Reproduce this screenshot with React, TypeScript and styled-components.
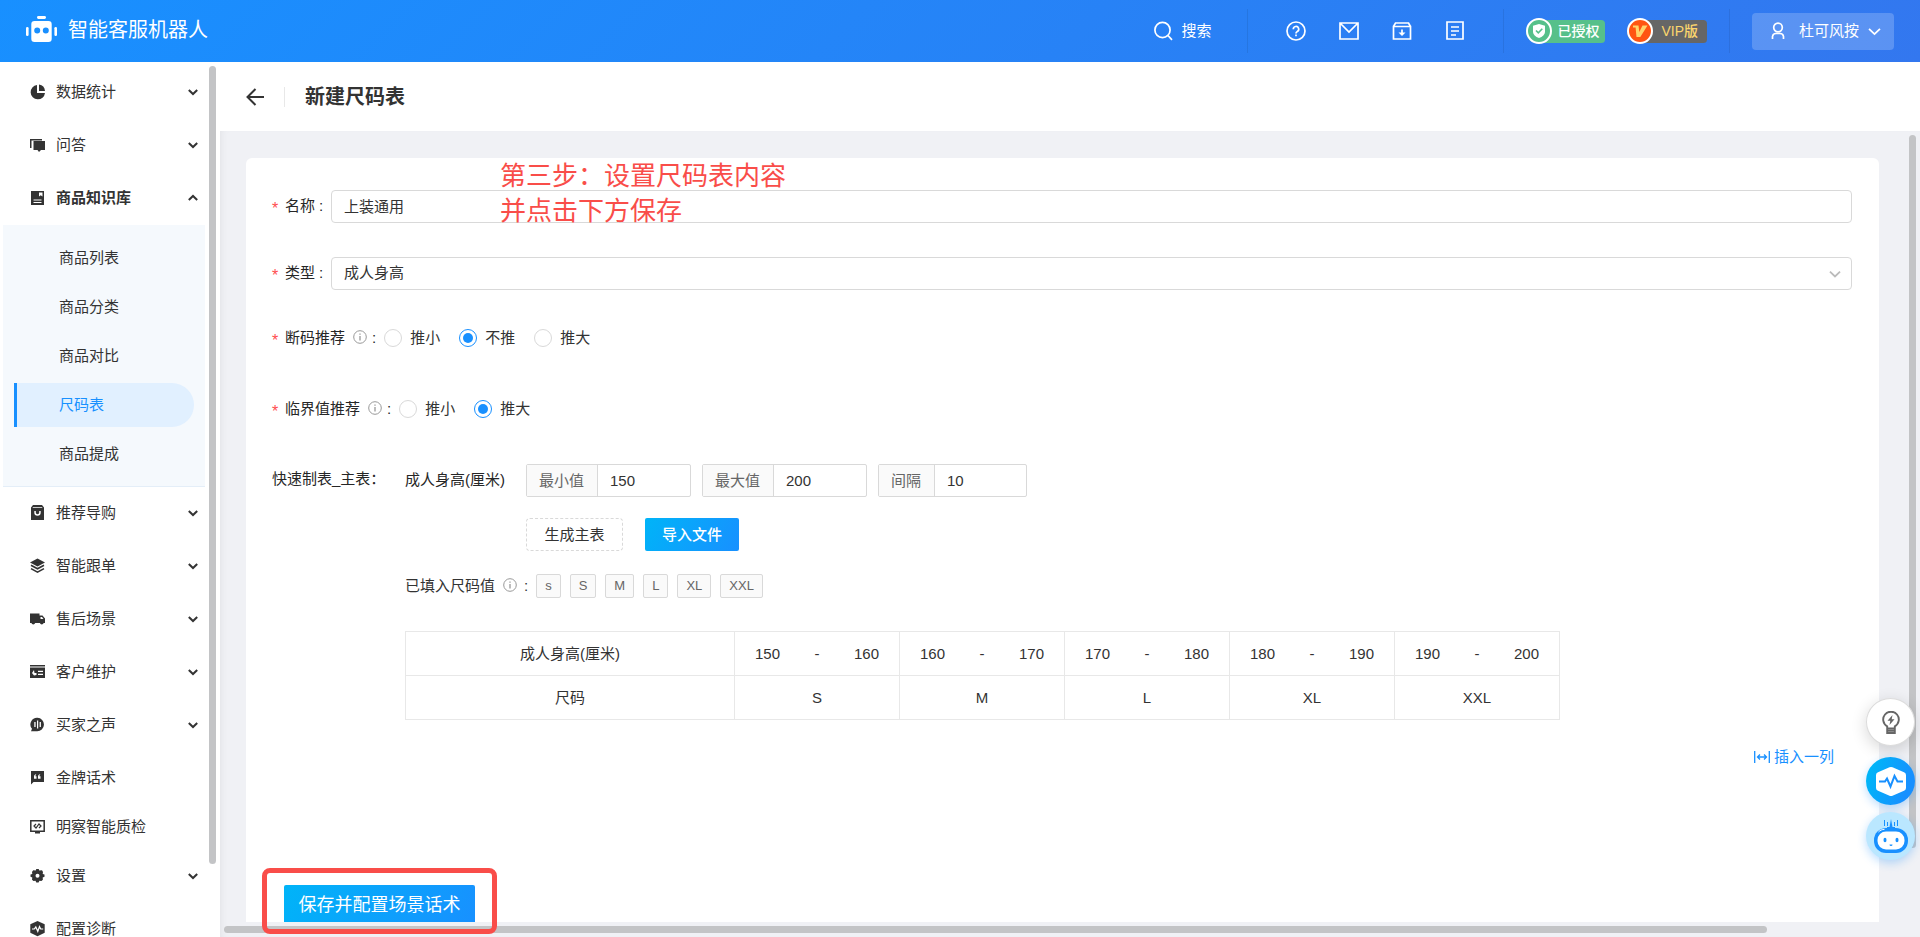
import React from "react";
import styled, { createGlobalStyle, css } from "styled-components";

const BLUE = "#1890ff";
const RED = "#f94d49";
const INK = "#333";

const GlobalStyle = createGlobalStyle`
  *, *::before, *::after { box-sizing: border-box; }
  body {
    margin: 0;
    color: ${INK};
    font: 15px/22px "Liberation Sans", "Noto Sans CJK SC", sans-serif;
    background: #f0f1f5;
  }
  button, input, select { font: inherit; color: inherit; }
  button { cursor: pointer; }
  a { color: inherit; text-decoration: none; }
`;

const Shell = styled.div`
  display: flex;
  flex-direction: column;
  height: 100vh;
  overflow: hidden;
`;

/* ---------- header ---------- */

const Header = styled.header`
  display: flex;
  align-items: center;
  flex: none;
  height: 62px;
  padding: 0 26px;
  color: #fff;
  background: linear-gradient(135deg, #1890ff, #3377ef);
`;

const Brand = styled.a`
  display: flex;
  align-items: center;
  gap: 11px;
  margin-right: auto;
  padding-bottom: 3px;
  font-size: 20px;
  line-height: 28px;
`;

const PlainButton = styled.button`
  display: flex;
  align-items: center;
  gap: 8px;
  padding: 0;
  border: 0;
  background: none;
`;

const HeaderRule = styled.span<{ $left: number; $right: number }>`
  width: 1px;
  height: 44px;
  margin: 0 ${(p) => p.$right}px 0 ${(p) => p.$left}px;
  background: rgba(0, 0, 0, 0.08);
`;

const HeaderTools = styled.div`
  display: flex;
  gap: 33px;
`;

const Badges = styled.div`
  display: flex;
  gap: 22px;
`;

const Badge = styled.span<{ $vip?: boolean }>`
  display: flex;
  align-items: center;
  height: 23px;
  padding-right: ${(p) => (p.$vip ? 9 : 6)}px;
  gap: ${(p) => (p.$vip ? 8 : 5)}px;
  border-radius: 12px 4px 4px 12px;
  color: ${(p) => (p.$vip ? "#fbd56d" : "#fff")};
  background: ${(p) => (p.$vip ? "#666" : "#56c08a")};
  font-size: 14px;
  font-weight: 500;
  line-height: 23px;
`;

const UserButton = styled.button`
  display: flex;
  align-items: center;
  height: 37px;
  padding: 0 13px 0 18px;
  border: 0;
  border-radius: 4px;
  background: rgba(255, 255, 255, 0.2);
  color: #fff;
`;

const UserName = styled.span`
  margin: 0 9px 0 13px;
`;

/* ---------- sidebar ---------- */

const Body = styled.div`
  display: flex;
  flex: 1;
  min-height: 0;
`;

const Sidebar = styled.aside`
  display: flex;
  flex: none;
  width: 220px;
  overflow: hidden;
  background: #fff;
`;

const Nav = styled.nav`
  flex: 1;
  padding-top: 5px;
`;

const NavGroup = styled.div<{ $leaf?: boolean; $open?: boolean }>`
  height: ${(p) => (p.$open ? 52 : p.$leaf ? 49 : 53)}px;
`;

const NavLink = styled.a<{ $open?: boolean }>`
  display: grid;
  grid-template-columns: 15px 1fr 10px;
  column-gap: 11px;
  align-items: center;
  height: 49px;
  padding: 0 7px 0 30px;
  font-weight: ${(p) => (p.$open ? 700 : 400)};
`;

const SubMenu = styled.div`
  margin: 0 0 1px 3px;
  padding: 8px 0 5px;
  border-bottom: 1px solid #e4eef8;
  background: #f5f9fd;
`;

const SubLink = styled.a<{ $active?: boolean }>`
  display: flex;
  align-items: center;
  height: 44px;
  margin: 3px 11px 5px;
  padding-left: 42px;
  border-left: 3px solid transparent;
  border-radius: 0 22px 22px 0;
  ${(p) =>
    p.$active &&
    css`
      border-color: ${BLUE};
      background: #e1f0ff;
      color: ${BLUE};
    `}
`;

const Track = styled.div<{ $horizontal?: boolean }>`
  flex: none;
  width: ${(p) => (p.$horizontal ? "auto" : "15px")};
  padding: 4px;
`;

const Thumb = styled.div<{ $horizontal?: boolean; $share: number }>`
  width: ${(p) => (p.$horizontal ? `${p.$share}%` : "7px")};
  height: ${(p) => (p.$horizontal ? "7px" : `${p.$share}%`)};
  border-radius: 4px;
  background: #c3c4c6;
`;

/* ---------- main column ---------- */

const Main = styled.main`
  position: relative;
  display: flex;
  flex-direction: column;
  flex: 1;
  min-width: 0;
`;

const TitleBar = styled.div`
  display: flex;
  align-items: center;
  flex: none;
  height: 69px;
  padding-left: 26px;
  background: #fff;
`;

const TitleRule = styled.span`
  width: 1px;
  height: 20px;
  margin: 0 20px 0 19px;
  background: #e8e8e8;
`;

const Title = styled.h1`
  margin: 0;
  font-size: 20px;
  line-height: 28px;
`;

const Workspace = styled.div`
  display: grid;
  grid-template-columns: minmax(0, 1fr) 15px;
  grid-template-rows: minmax(0, 1fr) 15px;
  flex: 1;
  min-height: 0;
  box-shadow: inset 6px 0 8px -6px rgba(0, 0, 0, 0.08);
`;

const Viewport = styled.div`
  padding: 27px 26px 0;
  overflow: hidden;
`;

const Card = styled.form`
  position: relative;
  padding: 32px 27px 24px 26px;
  border-radius: 6px;
  background: #fff;
`;

const FormRow = styled.div<{ $after: number; $short?: boolean }>`
  display: flex;
  align-items: center;
  height: ${(p) => (p.$short ? 28 : 33)}px;
  margin-bottom: ${(p) => p.$after}px;
`;

const labelText = css`
  display: flex;
  align-items: center;
  flex: none;
  color: #262626;
`;

const FieldLabel = styled.label`
  ${labelText}
  width: 59px;
  padding-bottom: 2px;
`;

const GroupLabel = styled.span`
  ${labelText}
  margin-right: 8px;
`;

const Star = styled.span`
  width: 13px;
  padding-top: 6px;
  color: #ff4d4f;
  font-size: 16px;
`;

const Colon = styled.span<{ $gap: number }>`
  margin-left: ${(p) => p.$gap}px;
`;

const InfoSlot = styled.span`
  display: flex;
  margin: 0 0 3px 8px;
`;

const control = css`
  width: 100%;
  min-width: 0;
  height: 33px;
  padding: 0 12px 2px;
  border: 1px solid #d9d9d9;
  border-radius: 4px;
  background: #fff;
  outline: 0;
`;

const TextInput = styled.input`
  ${control}
`;

const SelectWrap = styled.div`
  position: relative;
  flex: 1;
`;

const Select = styled.select`
  ${control}
  display: block;
  appearance: none;
`;

const SelectArrow = styled.span`
  position: absolute;
  top: 11px;
  right: 11px;
  display: flex;
  pointer-events: none;
`;

const RadioLabel = styled.label`
  display: flex;
  align-items: center;
  gap: 8px;
  margin-right: 19px;
`;

const Radio = styled.input`
  display: grid;
  place-content: center;
  appearance: none;
  width: 18px;
  height: 18px;
  margin: 0;
  border: 1px solid #d9d9d9;
  border-radius: 50%;
  background: #fff;
  &:checked { border-color: ${BLUE}; }
  &:checked::before {
    content: "";
    width: 10px;
    height: 10px;
    border-radius: 50%;
    background: ${BLUE};
  }
`;

const Builder = styled.section`
  display: flex;
`;

const BuilderLabel = styled.span`
  flex: none;
  width: 133px;
  padding-top: 4px;
  color: #262626;
`;

const BuilderBody = styled.div`
  flex: 1;
  min-width: 0;
`;

const BuilderRow = styled.div<{ $after: number; $indent?: boolean }>`
  display: flex;
  align-items: center;
  padding-left: ${(p) => (p.$indent ? 121 : 0)}px;
  margin-bottom: ${(p) => p.$after}px;
`;

const Measure = styled.span`
  width: 121px;
  padding-bottom: 2px;
  color: #262626;
`;

const AddonGroup = styled.label<{ $short?: boolean }>`
  display: flex;
  width: ${(p) => (p.$short ? 149 : 165)}px;
  height: 33px;
  margin-right: 11px;
  border: 1px solid #d9d9d9;
  border-radius: 2px;
`;

const Addon = styled.span`
  flex: none;
  padding: 5px 13px 4px 12px;
  border-right: 1px solid #d9d9d9;
  background: #fafafa;
  color: #666;
`;

const AddonInput = styled.input`
  width: 100%;
  min-width: 0;
  padding: 1px 12px 0;
  border: 0;
  background: none;
  outline: 0;
`;

const DashedButton = styled.button`
  width: 97px;
  height: 33px;
  margin-right: 22px;
  padding: 0;
  border: 1px dashed #d9d9d9;
  border-radius: 4px;
  background: #fff;
`;

const PrimaryButton = styled.button<{ $large?: boolean }>`
  width: ${(p) => (p.$large ? 191 : 94)}px;
  height: ${(p) => (p.$large ? 40 : 33)}px;
  padding: 0;
  border: 0;
  border-radius: 2px;
  background: linear-gradient(120deg, #00b4f8, ${BLUE});
  color: #fff;
  font-size: ${(p) => (p.$large ? 18 : 15)}px;
  font-weight: ${(p) => (p.$large ? 400 : 500)};
`;

const TagList = styled.ul`
  display: flex;
  gap: 9px;
  margin: 0 0 0 8px;
  padding: 0;
  list-style: none;
`;

const Tag = styled.li`
  height: 24px;
  padding: 0 8px;
  border: 1px solid #d9d9d9;
  border-radius: 2px;
  background: #fafafa;
  color: #666;
  font-size: 13px;
  line-height: 22px;
`;

const SizeTable = styled.table`
  width: 1155px;
  table-layout: fixed;
  border-collapse: collapse;
  th, td {
    height: 44px;
    padding: 0;
    border: 1px solid #e8e8e8;
    font-weight: 400;
    text-align: center;
  }
`;

const HeadColumn = styled.col`
  width: 329px;
`;

const Range = styled.div`
  display: flex;
  justify-content: space-between;
  padding: 0 20px;
`;

const InsertLink = styled.a`
  display: flex;
  align-items: center;
  justify-content: flex-end;
  gap: 4px;
  margin: 26px 18px 117px;
  color: ${BLUE};
`;

const Actions = styled.div`
  padding-left: 12px;
`;

/* ---------- overlays ---------- */

const Note = styled.p`
  position: absolute;
  top: 1px;
  left: 254px;
  margin: 0;
  color: ${RED};
  font-size: 26px;
  line-height: 35px;
  pointer-events: none;
`;

const Marker = styled.div`
  position: absolute;
  left: 42px;
  bottom: 3px;
  width: 235px;
  height: 66px;
  border: 5px solid ${RED};
  border-radius: 8px;
  pointer-events: none;
`;

const FloatBar = styled.div`
  position: fixed;
  right: 5px;
  bottom: 77px;
  display: flex;
  flex-direction: column;
  gap: 7px;
`;

const FloatButton = styled.button<{ $tone: "plain" | "pulse" | "robot" }>`
  display: grid;
  place-items: center;
  width: 49px;
  height: 48px;
  margin-bottom: ${(p) => (p.$tone === "plain" ? 4 : 0)}px;
  padding: 0;
  border: ${(p) => (p.$tone === "plain" ? "1px solid #dcdcdc" : "0")};
  border-radius: 50%;
  background: ${(p) =>
    ({
      plain: "#fff",
      pulse: `linear-gradient(110deg, #00b4f8 15%, ${BLUE} 80%)`,
      robot: "#bae7ff",
    })[p.$tone]};
  box-shadow: ${(p) =>
    p.$tone === "plain" ? "0 4px 16px rgba(0,0,0,.16)" : "0 3px 10px rgba(24,144,255,.3)"};
`;

/* ---------- drawings ---------- */

const RobotLogo = () => (
  <svg width="31" height="27" viewBox="0 0 31 27" fill="#fff" aria-hidden="true">
    <rect x="11" y="0" width="9" height="3" rx="1.4" />
    <path
      fillRule="evenodd"
      d="M8.5 5h14A3.2 3.2 0 0 1 25.700 8.200v14.600a3.200 3.200 0 0 1-3.200 3.200h-14a3.200 3.200 0 0 1-3.200-3.200V8.200A3.200 3.200 0 0 1 8.500 5zM11.200 11.400a3 3 0 1 0 0 6 3 3 0 0 0 0-6zm8.600 0a3 3 0 1 0 0 6 3 3 0 0 0 0-6z"
    />
    <rect x="0" y="11" width="2.600" height="9" rx="1.200" />
    <rect x="28.400" y="11" width="2.600" height="9" rx="1.200" />
  </svg>
);

const Chevron = ({ up, size = 10, color = INK, width = 2 }: { up?: boolean; size?: number; color?: string; width?: number }) => (
  <svg width={size} height={size} viewBox="0 0 10 10" fill="none" stroke={color} strokeWidth={width} aria-hidden="true">
    <path d={up ? "M.8 7 5 3l4.200 4" : "M.8 3 5 7l4.200-4"} />
  </svg>
);

const Info = () => (
  <InfoSlot>
    <svg width="14" height="14" viewBox="0 0 14 14" fill="none" stroke="#999" aria-hidden="true">
      <circle cx="7" cy="7" r="6.300" />
      <path d="M7 6v4.400M7 3.400v1.400" strokeWidth="1.300" />
    </svg>
  </InfoSlot>
);

const Line = ({ children, width = 20, height = 22 }: { children: React.ReactNode; width?: number; height?: number }) => (
  <svg width={width} height={height} viewBox={`0 0 ${width} ${height}`} fill="none" stroke="#fff" strokeWidth="1.700" aria-hidden="true">
    {children}
  </svg>
);

const menuShapes: Record<string, React.ReactNode> = {
  pie: <path d="M7 1v8h8A7.200 7.200 0 1 1 7 1zM9 .6A7 7 0 0 1 15 7H9z" />,
  chat: (
    <>
      <path d="M0 2h12v1.500H1.500V11H0z" />
      <path d="M3.500 4H15v9h-4l-2 2-1.500-2h-4z" />
    </>
  ),
  book: <path fillRule="evenodd" d="M1 1h13v14H1zM9 2.500v4l1.700-1.200L12.500 6.500v-4zM3.500 9.500v1h8v-1zm0 2.500v1h8v-1z" />,
  bag: <path fillRule="evenodd" d="M3 0h9l2 2.500V15H1V2.500zM3 2l-.5.8h10L12 2zM4.300 6v1.500a3.200 3.200 0 0 0 6.400 0V6H9.200v1.500a1.700 1.700 0 0 1-3.400 0V6z" />,
  layers: (
    <>
      <path d="M7.500.5 15 4.500l-7.500 4L0 4.500z" />
      <path d="m1 7.300 6.500 3.500L14 7.300M1 10.600l6.500 3.500 6.500-3.500" fill="none" stroke={INK} strokeWidth="1.600" />
    </>
  ),
  truck: (
    <path
      fillRule="evenodd"
      d="M0 2.500h9.500v2h3L15 7.500V12h-1.300a2 2 0 0 1-3.800 0H5.200a2 2 0 0 1-3.800 0H0zM10.500 6v2h3L12 6z"
    />
  ),
  card: <path fillRule="evenodd" d="M0 1h15v1.600H0zM0 3.600h15V14H0zM4 6 2 9l2 2.500 2.500-.5V9H4.500zM8 6.700V8h5V6.700zM8 9.700V11h5V9.700z" />,
  voice: (
    <path
      fillRule="evenodd"
      d="M7.500.8A6.700 6.700 0 1 1 7 14.200H1l1-2.400A6.700 6.700 0 0 1 7.500.8zM4.300 5v5h1.300V5zm2.700-1.500v8h1.200v-8zM9.600 5v5h1.300V5z"
    />
  ),
  quote: (
    <path
      fillRule="evenodd"
      d="M1 1h13v11H3.500L1 14.500zM4 6.500v2.300h2.500V6.300H5.300L6.300 4C4.800 4.400 4 5.300 4 6.500zm4 0v2.300h2.500V6.300H9.300L10.300 4C8.800 4.400 8 5.300 8 6.500z"
    />
  ),
  monitor: (
    <>
      <path d="M.8 1.800h13.400v10.400H.8z" fill="none" stroke={INK} strokeWidth="1.500" />
      <path d="M5 12h5v2.500H5z" />
      <path d="M6 5 4 7l2 2 3-4 2 2-2 2" fill="none" stroke={INK} strokeWidth="1.200" />
    </>
  ),
  gear: (
    <path
      fillRule="evenodd"
      d="M6.300 1h2.400l.6 1.500 2.700-.2 1 1.800-.3 1.800 1.800.7v2.200l-1.800.8.2 2.200-1.500 1.300-2-.4-.8 1.800H6.300l-.8-1.800-2 .4L2 11.800l.3-2.200L.5 8.800V6.600l1.800-.7L2 4.100 3.200 2.300l2.500.2zM7.500 5.700a2 2 0 1 0 0 4 2 2 0 0 0 0-4z"
    />
  ),
  pulse: (
    <>
      <path d="m7.500 0 7.200 3.200v8.600L7.500 15.200.3 11.800V3.200z" />
      <path d="M2 8h2.300l1.500-2 2 4.300L9.500 5.500l1.200 2.500h2.500" fill="none" stroke="#fff" strokeWidth="1.200" />
    </>
  ),
};

const MenuIcon = ({ name }: { name: string }) => (
  <svg width="15" height="16" viewBox="0 0 15 16" fill={INK} aria-hidden="true">
    {menuShapes[name]}
  </svg>
);

/* ---------- data ---------- */

type MenuEntry = { label: string; icon: string; leaf?: boolean; children?: string[] };

const menu: MenuEntry[] = [
  { label: "数据统计", icon: "pie" },
  { label: "问答", icon: "chat" },
  { label: "商品知识库", icon: "book", children: ["商品列表", "商品分类", "商品对比", "尺码表", "商品提成"] },
  { label: "推荐导购", icon: "bag" },
  { label: "智能跟单", icon: "layers" },
  { label: "售后场景", icon: "truck" },
  { label: "客户维护", icon: "card" },
  { label: "买家之声", icon: "voice" },
  { label: "金牌话术", icon: "quote", leaf: true },
  { label: "明察智能质检", icon: "monitor", leaf: true },
  { label: "设置", icon: "gear" },
  { label: "配置诊断", icon: "pulse", leaf: true },
];

const sizes = [
  { from: 150, to: 160, size: "S" },
  { from: 160, to: 170, size: "M" },
  { from: 170, to: 180, size: "L" },
  { from: 180, to: 190, size: "XL" },
  { from: 190, to: 200, size: "XXL" },
];

const RadioRow = ({ label, name, options, value, after }: { label: string; name: string; options: string[]; value: string; after: number }) => (
  <FormRow $short $after={after} role="radiogroup" aria-label={label}>
    <GroupLabel>
      <Star>*</Star>
      {label}
      <Info />
      <Colon $gap={5}>:</Colon>
    </GroupLabel>
    {options.map((option) => (
      <RadioLabel key={option}>
        <Radio type="radio" name={name} defaultChecked={option === value} />
        {option}
      </RadioLabel>
    ))}
  </FormRow>
);

const TopBar = () => (
  <Header>
    <Brand href="#">
      <RobotLogo />
      智能客服机器人
    </Brand>
    <PlainButton>
      <Line width={19}>
        <circle cx="8.500" cy="10" r="7.600" />
        <path d="m14 15.500 4 4.300" />
      </Line>
      搜索
    </PlainButton>
    <HeaderRule $left={36} $right={38} />
    <HeaderTools>
      <PlainButton aria-label="帮助">
        <Line>
          <circle cx="10" cy="11" r="9" />
          <path d="M7.300 9.200a2.700 2.700 0 1 1 4 2.300c-.9.500-1.300.8-1.300 1.900M10 14.600v1.700" />
        </Line>
      </PlainButton>
      <PlainButton aria-label="消息">
        <Line>
          <path d="M1 3h18v16H1zM1.500 3.500 10 12l8.500-8.500" />
        </Line>
      </PlainButton>
      <PlainButton aria-label="下载">
        <Line>
          <path d="M1.500 6.500h17V19h-17zM1.500 6.500 3.500 3h13l2 3.500M10 9.500v5" />
          <path d="M6.500 12.500h7L10 16z" fill="#fff" stroke="none" />
        </Line>
      </PlainButton>
      <PlainButton aria-label="文档">
        <Line>
          <path d="M2 2h16v17H2zM6 7h8M6 11h8M6 15h5" />
        </Line>
      </PlainButton>
    </HeaderTools>
    <HeaderRule $left={38} $right={22} />
    <Badges>
      <Badge>
        <svg width="26" height="26" viewBox="0 0 26 26" aria-hidden="true">
          <circle cx="13" cy="13" r="12" fill="#56c08a" stroke="#fff" strokeWidth="2" />
          <path d="m13 6 6 1.800v6.200c0 2.600-2.500 4.700-6 6-3.500-1.300-6-3.400-6-6V7.800z" fill="#fff" />
          <path d="m10 12.500 2.300 2.300 4-4" fill="none" stroke="#56c08a" strokeWidth="1.600" />
        </svg>
        已授权
      </Badge>
      <Badge $vip>
        <svg width="26" height="26" viewBox="0 0 26 26" aria-hidden="true">
          <circle cx="13" cy="13" r="12" fill="#ff5512" stroke="#fff" strokeWidth="2" />
          <path d="M6 7.500h5.500l.8 6.500 3.200-6.500H20.500L13.300 19H9.500L8.600 9.500H6z" fill="#ffd46b" />
        </svg>
        VIP版
      </Badge>
    </Badges>
    <HeaderRule $left={22} $right={22} />
    <UserButton>
      <Line width={16}>
        <circle cx="8" cy="7.500" r="4.300" />
        <path d="M2.500 19v-2.500a3.500 3.500 0 0 1 3.500-3h4a3.500 3.500 0 0 1 3.500 3V19" />
      </Line>
      <UserName>杜可风按</UserName>
      <Chevron size={13} color="#fff" width={1.4} />
    </UserButton>
  </Header>
);

const SideMenu = () => (
  <Sidebar>
    <Nav>
      {menu.map(({ label, icon, leaf, children }) => (
        <React.Fragment key={label}>
          <NavGroup $leaf={leaf} $open={!!children}>
            <NavLink href="#" $open={!!children}>
              <MenuIcon name={icon} />
              {label}
              {!leaf && <Chevron up={!!children} />}
            </NavLink>
          </NavGroup>
          {children && (
            <SubMenu>
              {children.map((child) => (
                <SubLink key={child} href="#" $active={child === "尺码表"}>
                  {child}
                </SubLink>
              ))}
            </SubMenu>
          )}
        </React.Fragment>
      ))}
    </Nav>
    <Track>
      <Thumb $share={92} />
    </Track>
  </Sidebar>
);

const SizeForm = () => (
  <Card onSubmit={(e) => e.preventDefault()}>
    <FormRow $after={34}>
      <FieldLabel htmlFor="chart-name">
        <Star>*</Star>名称<Colon $gap={4}>:</Colon>
      </FieldLabel>
      <TextInput id="chart-name" defaultValue="上装通用" />
    </FormRow>
    <FormRow $after={34}>
      <FieldLabel htmlFor="chart-type">
        <Star>*</Star>类型<Colon $gap={4}>:</Colon>
      </FieldLabel>
      <SelectWrap>
        <Select id="chart-type">
          <option>成人身高</option>
        </Select>
        <SelectArrow>
          <Chevron size={12} color="#bbb" width={1.5} />
        </SelectArrow>
      </SelectWrap>
    </FormRow>
    <RadioRow label="断码推荐" name="broken" options={["推小", "不推", "推大"]} value="不推" after={43} />
    <RadioRow label="临界值推荐" name="edge" options={["推小", "推大"]} value="推大" after={41} />

    <Builder>
      <BuilderLabel>快速制表_主表：</BuilderLabel>
      <BuilderBody>
        <BuilderRow $after={21}>
          <Measure>成人身高(厘米)</Measure>
          <AddonGroup>
            <Addon>最小值</Addon>
            <AddonInput defaultValue="150" />
          </AddonGroup>
          <AddonGroup>
            <Addon>最大值</Addon>
            <AddonInput defaultValue="200" />
          </AddonGroup>
          <AddonGroup $short>
            <Addon>间隔</Addon>
            <AddonInput defaultValue="10" />
          </AddonGroup>
        </BuilderRow>
        <BuilderRow $after={23} $indent>
          <DashedButton type="button">生成主表</DashedButton>
          <PrimaryButton type="button">导入文件</PrimaryButton>
        </BuilderRow>
        <BuilderRow $after={33}>
          已填入尺码值
          <Info />
          <Colon $gap={7}>:</Colon>
          <TagList>
            {["s", "S", "M", "L", "XL", "XXL"].map((tag) => (
              <Tag key={tag}>{tag}</Tag>
            ))}
          </TagList>
        </BuilderRow>
        <SizeTable>
          <colgroup>
            <HeadColumn />
            {sizes.map((s) => (
              <col key={s.size} />
            ))}
          </colgroup>
          <tbody>
            <tr>
              <th scope="row">成人身高(厘米)</th>
              {sizes.map((s) => (
                <td key={s.size}>
                  <Range>
                    <span>{s.from}</span>
                    <span>-</span>
                    <span>{s.to}</span>
                  </Range>
                </td>
              ))}
            </tr>
            <tr>
              <th scope="row">尺码</th>
              {sizes.map((s) => (
                <td key={s.size}>{s.size}</td>
              ))}
            </tr>
          </tbody>
        </SizeTable>
      </BuilderBody>
    </Builder>

    <InsertLink href="#">
      <svg width="16" height="14" viewBox="0 0 16 14" fill="none" stroke={BLUE} strokeWidth="1.300" aria-hidden="true">
        <path d="M.7 1v12M15.300 1v12M3.500 7h9M6 4.500 3.500 7 6 9.500M10 4.500 12.500 7 10 9.500" />
      </svg>
      插入一列
    </InsertLink>
    <Actions>
      <PrimaryButton $large>保存并配置场景话术</PrimaryButton>
    </Actions>
    <Note>
      第三步：设置尺码表内容
      <br />
      并点击下方保存
    </Note>
  </Card>
);

const FloatingTools = () => (
  <FloatBar>
    <FloatButton $tone="plain" aria-label="提示">
      <svg width="18" height="23" viewBox="0 0 18 23" fill="none" stroke="#666" strokeWidth="1.900" aria-hidden="true">
        <path d="M5.200 17.500v-2.200a7.800 7.800 0 1 1 7.600 0v2.200zM5.200 17.500V22h7.600v-4.500M5.200 19.800h7.600" />
        <path d="m10.500 4-5 5.800h2.800L7.500 14l5-5.800H9.700z" fill="#666" stroke="none" />
      </svg>
    </FloatButton>
    <FloatButton $tone="pulse" aria-label="诊断">
      <svg width="30" height="31" viewBox="0 0 30 31" aria-hidden="true">
        <path d="M13.500 1.300a3.500 3.500 0 0 1 3 0l11.500 5a3 3 0 0 1 2 2.700v13a3 3 0 0 1-2 2.700l-11.500 5a3.500 3.500 0 0 1-3 0L2 24.700A3 3 0 0 1 0 22V9a3 3 0 0 1 2-2.700z" fill="#fff" />
        <path d="M3 15.500h6l2-3 3.500 8 4-10.500 3 5.500h5.500" fill="none" stroke={BLUE} strokeWidth="2" />
      </svg>
    </FloatButton>
    <FloatButton $tone="robot" aria-label="机器人助手">
      <svg width="36" height="36" viewBox="0 0 36 36" aria-hidden="true">
        <path d="m18 1 1.500 8h2.500v2h-8V9h2.500z" fill={BLUE} />
        <path d="M11.500 2v6M14.500 4v4M21.500 4v4M24.500 2v6" stroke={BLUE} strokeWidth="1" />
        <rect x="1" y="10" width="34" height="25" rx="12" fill={BLUE} />
        <rect x="4.500" y="13.500" width="27" height="18" rx="8.500" fill="#fff" />
        <ellipse cx="12" cy="22" rx="1.500" ry="2.200" fill={BLUE} />
        <ellipse cx="24" cy="22" rx="1.500" ry="2.200" fill={BLUE} />
        <path d="M16.500 26.500h3a1.500 1.500 0 0 1-3 0z" fill={BLUE} />
        <path d="M5.500 14c1.500-1.800 3.500-2.500 6-2.700" fill="none" stroke="#fff" strokeWidth="1" />
      </svg>
    </FloatButton>
  </FloatBar>
);

export default function App() {
  return (
    <Shell>
      <GlobalStyle />
      <TopBar />
      <Body>
        <SideMenu />
        <Main>
          <TitleBar>
            <PlainButton aria-label="返回">
              <svg width="19" height="18" viewBox="0 0 19 18" fill="none" stroke={INK} strokeWidth="2" aria-hidden="true">
                <path d="M18 9H2M9.500 1 1.500 9l8 8" />
              </svg>
            </PlainButton>
            <TitleRule />
            <Title>新建尺码表</Title>
          </TitleBar>
          <Workspace>
            <Viewport>
              <SizeForm />
            </Viewport>
            <Track>
              <Thumb $share={91} />
            </Track>
            <Track $horizontal>
              <Thumb $horizontal $share={92} />
            </Track>
          </Workspace>
          <Marker />
        </Main>
      </Body>
      <FloatingTools />
    </Shell>
  );
}
